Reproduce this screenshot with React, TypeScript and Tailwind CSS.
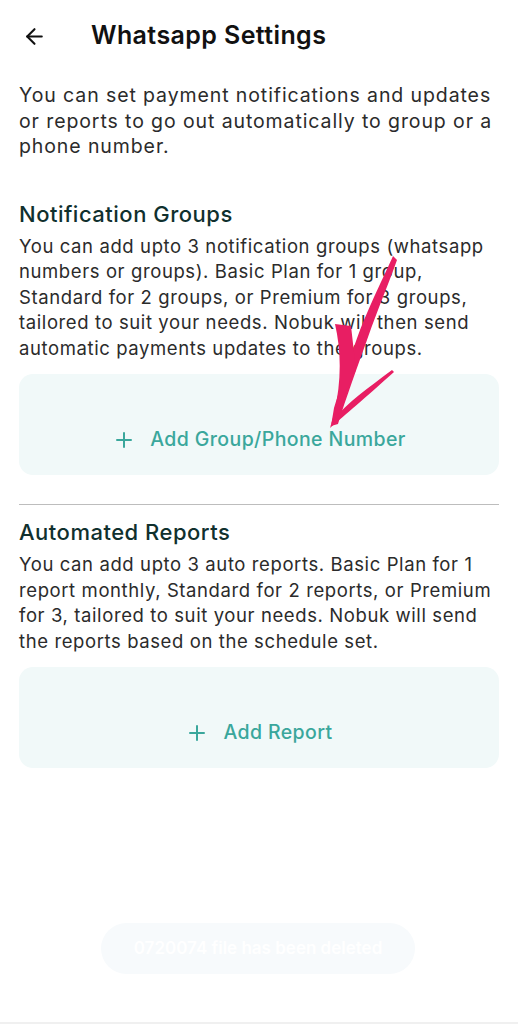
import { ArrowLeft, Plus } from 'lucide-react'

const font = { fontFamily: 'Inter, "Noto Sans", sans-serif' }

function AddCard({ label }: { label: string }) {
  return (
    <button className="w-full h-[101px] rounded-[14px] bg-[#f1f9f9] flex items-center justify-center gap-[14px] pt-[30px] text-[#3aa79c]">
      <Plus className="w-[24px] h-[24px]" strokeWidth={2} />
      <span className="text-[19.5px] font-medium tracking-[0.4px]">{label}</span>
    </button>
  )
}

function Section({ title, body, action }: { title: string; body: string; action: string }) {
  return (
    <section>
      <h2 className="text-[22px] font-medium text-[#10302e] leading-[26px] tracking-[0.5px]">{title}</h2>
      <p className="mt-[7px] text-[18.5px] leading-[25.5px] text-[#2b2b2b] tracking-[0.6px]">{body}</p>
      <div className="mt-[13px]">
        <AddCard label={action} />
      </div>
    </section>
  )
}

export default function App() {
  return (
    <div className="relative w-[518px] h-[1024px] bg-white overflow-hidden" style={font}>
      <header className="flex items-center h-[72px] px-[22px]">
        <ArrowLeft className="w-[25px] h-[25px] text-[#111]" strokeWidth={2} />
        <h1 className="ml-[44px] text-[25px] font-semibold text-[#111] tracking-[0.4px]">Whatsapp Settings</h1>
      </header>

      <main className="px-[19px]">
        <p className="mt-[11px] text-[19.5px] leading-[25.5px] text-[#2b2b2b] tracking-[0.9px]">
          You can set payment notifications and updates or reports to go out automatically to group or a phone number.
        </p>

        <div className="mt-[41px]">
          <Section
            title="Notification Groups"
            body="You can add upto 3 notification groups (whatsapp numbers or groups). Basic Plan for 1 group, Standard for 2 groups, or Premium for 3 groups, tailored to suit your needs. Nobuk will then send automatic payments updates to the groups."
            action="Add Group/Phone Number"
          />
        </div>

        <hr className="mt-[29px] border-t border-[#bdbdbd]" />

        <div className="mt-[14px]">
          <Section
            title="Automated Reports"
            body="You can add upto 3 auto reports. Basic Plan for 1 report monthly, Standard for 2 reports, or Premium for 3, tailored to suit your needs. Nobuk will send the reports based on the schedule set."
            action="Add Report"
          />
        </div>
      </main>

      {/* faded toast */}
      <div className="absolute left-[101px] top-[923px] w-[314px] h-[51px] rounded-full bg-[#f7fafc] flex items-center justify-center">
        <span className="text-[17px] font-semibold text-white">0720074 file has been deleted</span>
      </div>

      <div className="absolute left-0 right-0 bottom-0 h-[2px] bg-[#f0f0f0]" />

      {/* hand-drawn annotation */}
      <svg className="absolute left-0 top-0 pointer-events-none" width="518" height="1024" viewBox="0 0 518 1024">
        <path d="M393 256 C386 272 372 300 360 330 C352 352 342 382 334 408 L331 426 L338 424 C346 398 357 368 367 340 C379 306 390 280 397 260 Z" fill="#e81e63" />
        <path d="M335 324 C341 350 342 380 334 414 L330 428 C337 410 346 392 356 370 L351 326 Z" fill="#e81e63" />
        <path d="M330 428 C345 415 365 398 394 372 L392 370 C368 388 348 402 333 420 Z" fill="#e81e63" />
      </svg>
    </div>
  )
}
